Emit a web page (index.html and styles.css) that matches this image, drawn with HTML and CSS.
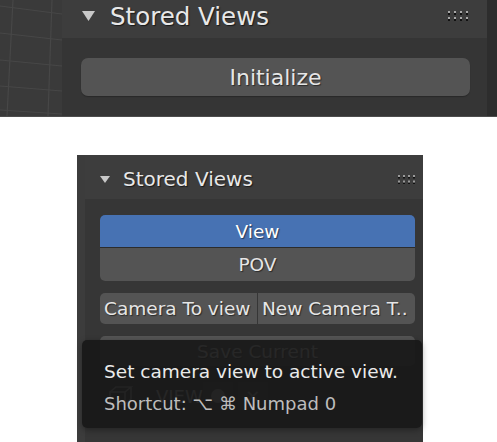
FILE: index.html
```html
<!DOCTYPE html>
<html>
<head>
<meta charset="utf-8">
<link rel="stylesheet" href="styles.css">
</head>
<body>
<div class="top">
  <div class="viewport">
    <svg width="62" height="116" viewBox="0 0 62 116">
      <g stroke="#474747" stroke-width="1.2" fill="none">
        <path d="M13 0 L7 116"/>
        <path d="M52 0 L48 116"/>
        <path d="M0 6 L62 14"/>
        <path d="M0 33 L62 40"/>
        <path d="M0 60 L62 66"/>
        <path d="M0 86 L62 91"/>
        <path d="M0 110 L62 114"/>
      </g>
    </svg>
  </div>
  <div class="panel-lg">
    <div class="hdr-lg">
      <svg class="tri-lg" width="13" height="10" viewBox="0 0 13 10"><path d="M0 0 H13 L6.5 10 Z" fill="#c8c8c8"/></svg>
      <span class="title-lg">Stored Views</span>
      <svg class="dots-lg" width="24" height="10" viewBox="0 0 24 10">
        <g fill="#111"><rect x="0" y="2" width="2" height="2"/><rect x="6" y="2" width="2" height="2"/><rect x="12" y="2" width="2" height="2"/><rect x="18" y="2" width="2" height="2"/><rect x="0" y="8" width="2" height="2"/><rect x="6" y="8" width="2" height="2"/><rect x="12" y="8" width="2" height="2"/><rect x="18" y="8" width="2" height="2"/></g>
        <g fill="#a8a8a8"><rect x="0" y="0" width="2" height="2"/><rect x="6" y="0" width="2" height="2"/><rect x="12" y="0" width="2" height="2"/><rect x="18" y="0" width="2" height="2"/><rect x="0" y="6" width="2" height="2"/><rect x="6" y="6" width="2" height="2"/><rect x="12" y="6" width="2" height="2"/><rect x="18" y="6" width="2" height="2"/></g>
      </svg>
    </div>
    <div class="body-lg">
      <div class="btn-lg">Initialize</div>
    </div>
  </div>
  <div class="edge"></div>
</div>

<div class="bottom">
  <div class="strip"></div>
  <div class="panel-sm">
    <div class="hdr-sm">
      <svg class="tri-sm" width="10" height="7" viewBox="0 0 10 7"><path d="M0 0 H10 L5 7 Z" fill="#c8c8c8"/></svg>
      <span class="title-sm">Stored Views</span>
      <svg class="dots-sm" width="18" height="9" viewBox="0 0 18 9">
        <g fill="#111"><rect x="0" y="2" width="2" height="1.5"/><rect x="5" y="2" width="2" height="1.5"/><rect x="10" y="2" width="2" height="1.5"/><rect x="15" y="2" width="2" height="1.5"/><rect x="0" y="7.5" width="2" height="1.5"/><rect x="5" y="7.5" width="2" height="1.5"/><rect x="10" y="7.5" width="2" height="1.5"/><rect x="15" y="7.5" width="2" height="1.5"/></g>
        <g fill="#9a9a9a"><rect x="0" y="0" width="2" height="2"/><rect x="5" y="0" width="2" height="2"/><rect x="10" y="0" width="2" height="2"/><rect x="15" y="0" width="2" height="2"/><rect x="0" y="5.5" width="2" height="2"/><rect x="5" y="5.5" width="2" height="2"/><rect x="10" y="5.5" width="2" height="2"/><rect x="15" y="5.5" width="2" height="2"/></g>
      </svg>
    </div>
    <div class="body-sm">
      <div class="stack">
        <div class="opt active">View</div>
        <div class="opt">POV</div>
      </div>
      <div class="pair">
        <div class="opt left">Camera To view</div>
        <div class="opt right">New Camera T..</div>
      </div>
      <div class="opt save">Save Current</div>
      <div class="list">
        <svg class="cam" width="26" height="22" viewBox="0 0 26 22"><g fill="none" stroke="#a0a0a0" stroke-width="1.6"><rect x="2" y="7" width="15" height="12"/><path d="M2 7 L8 2 H23 L17 7 M23 2 V14 L17 19"/></g></svg>
        <span class="vname">VIEW</span>
        <span class="cell"><span class="dot"></span></span>
        <span class="cell x">✕</span>
      </div>
    </div>
  </div>
  <div class="tooltip">
    <div class="tip-main">Set camera view to active view.</div>
    <div class="tip-short">Shortcut: ⌥ ⌘ Numpad 0</div>
  </div>
</div>
</body>
</html>
```

FILE: styles.css
```css
* { box-sizing: border-box; }

body {
  margin: 0;
  background: #ffffff;
  font-family: "DejaVu Sans", "Noto Sans", sans-serif;
  width: 497px;
  height: 442px;
  overflow: hidden;
}

/* ---------- top screenshot ---------- */
.top {
  display: flex;
  height: 117px;
  border-bottom: 1px solid #4d4d4d;
}

.viewport {
  width: 62px;
  background: #3a3a3a;
}
.viewport svg { display: block; }

.panel-lg {
  flex: 1;
  display: flex;
  flex-direction: column;
}

.hdr-lg {
  height: 38px;
  flex: none;
  background: #3d3d3d;
  display: flex;
  align-items: center;
  padding: 0 15px 6px 20px;
}

.tri-lg { flex: none; }

.title-lg {
  margin-left: 15px;
  font-size: 24.5px;
  color: #e8e8e8;
  text-shadow: 1px 1px 1px rgba(0,0,0,.6);
}

.dots-lg { margin-left: auto; }

.body-lg {
  flex: 1;
  background: #353535;
  padding: 20px 17px 0 19px;
}

.btn-lg {
  height: 38px;
  border-radius: 7px;
  background: #545454;
  color: #e6e6e6;
  font-size: 22px;
  display: flex;
  align-items: center;
  justify-content: center;
  text-shadow: 1px 1px 1px rgba(0,0,0,.5);
  box-shadow: 0 1px 1px rgba(0,0,0,.25);
}

.edge {
  width: 10px;
  background: #2d2d2d;
}

/* ---------- bottom screenshot ---------- */
.bottom {
  position: relative;
  margin: 38px 0 0 77px;
  width: 346px;
  height: 287px;
  display: flex;
}

.strip {
  width: 8px;
  background: #3c3c3c;
}

.panel-sm {
  flex: 1;
  display: flex;
  flex-direction: column;
}

.hdr-sm {
  height: 44px;
  flex: none;
  background: #3d3d3d;
  display: flex;
  align-items: center;
  padding: 4px 7px 0 15px;
}

.title-sm {
  margin-left: 13px;
  font-size: 20px;
  color: #e8e8e8;
  text-shadow: 1px 1px 1px rgba(0,0,0,.6);
}

.dots-sm { margin-left: auto; }

.body-sm {
  flex: 1;
  background: #363636;
  padding: 16px 8px 0 15px;
  display: flex;
  flex-direction: column;
}

.opt {
  height: 32px;
  font-size: 18.5px;
  color: #e6e6e6;
  background: #545454;
  display: flex;
  align-items: center;
  justify-content: center;
  text-shadow: 1px 1px 1px rgba(0,0,0,.5);
}

.opt.active {
  background: #4772b3;
  color: #ffffff;
}

.stack {
  display: flex;
  flex-direction: column;
  gap: 1px;
  background: #2c2c2c;
  border-radius: 5px;
  overflow: hidden;
}

.stack .opt:last-child { height: 33px; }

.pair {
  margin-top: 12px;
  display: flex;
  gap: 1px;
}

.pair .opt {
  flex: 1;
  height: 31px;
  justify-content: flex-start;
  padding-left: 4px;
  white-space: nowrap;
  overflow: hidden;
}

.pair .left { border-radius: 5px 0 0 5px; }
.pair .right { border-radius: 0 5px 5px 0; }

.save {
  margin-top: 12px;
  height: 30px;
  border-radius: 5px;
  color: #d8d8d8;
}

.list {
  margin-top: 12px;
  height: 36px;
  display: flex;
  align-items: center;
  padding-left: 8px;
}

.cam { flex: none; }

.vname {
  margin-left: 22px;
  font-size: 18px;
  color: #c4c4c4;
}

.cell {
  width: 30px;
  height: 28px;
  background: #464646;
  display: flex;
  align-items: center;
  justify-content: center;
  color: #a8a8a8;
  font-size: 18px;
}

.cell:first-of-type { margin-left: auto; }
.cell.x { margin-left: 5px; margin-right: 8px; }

.dot {
  width: 14px;
  height: 14px;
  border-radius: 50%;
  background: #a0a0a0;
}

.tooltip {
  position: absolute;
  left: 5px;
  top: 185px;
  width: 340px;
  height: 88px;
  background: rgba(24, 24, 24, 0.92);
  border-radius: 5px;
  padding: 16px 0 0 22px;
  font-size: 18.5px;
  line-height: 32px;
  box-shadow: 0 2px 6px rgba(0,0,0,.35);
  white-space: nowrap;
}

.tip-main { color: #eaeaea; }
.tip-short { color: #bdbdbd; font-size: 18px; }
```
